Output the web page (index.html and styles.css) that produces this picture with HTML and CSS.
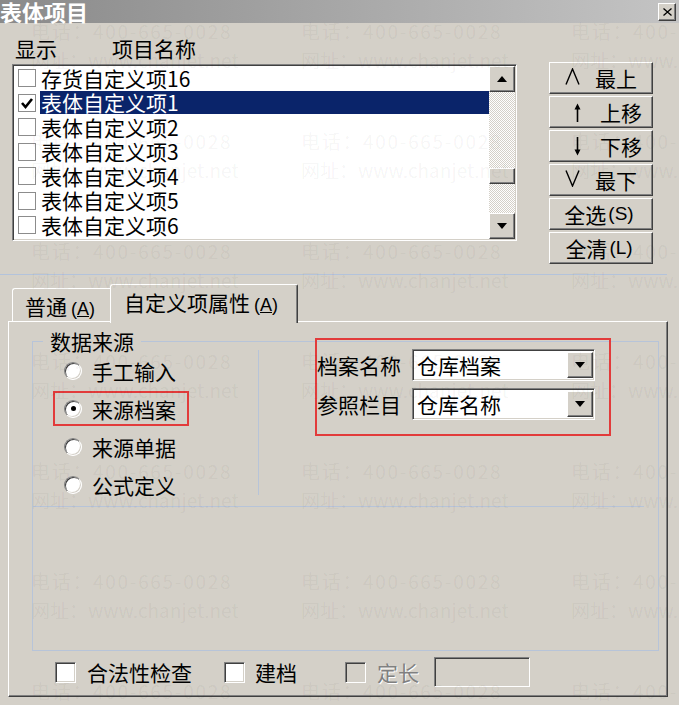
FILE: index.html
```html
<!DOCTYPE html>
<html lang="zh-CN">
<head>
<meta charset="utf-8">
<title>表体项目</title>
<link rel="stylesheet" href="styles.css">
</head>
<body>
<div class="titlebar">
  <span class="title">表体项目</span>
  <span class="close"><svg width="9" height="8" viewBox="0 0 9 8"><path d="M0.5 0.5L8.5 7.5M8.5 0.5L0.5 7.5" stroke="#000" stroke-width="1.3"/></svg></span>
</div>

<div class="upper">
  <div class="listcol">
    <div class="listhead"><span>显示</span><span class="h-name">项目名称</span></div>
    <div class="listbox">
      <div class="rows">
        <div class="row"><span class="lcb"></span><span class="ltext">存货自定义项16</span></div>
        <div class="row"><span class="lcb"><svg width="16" height="16" viewBox="0 0 16 16"><path d="M3 8L6.5 12L13 4" fill="none" stroke="#000" stroke-width="2.6"/></svg></span><span class="ltext sel">表体自定义项1</span></div>
        <div class="row"><span class="lcb"></span><span class="ltext">表体自定义项2</span></div>
        <div class="row"><span class="lcb"></span><span class="ltext">表体自定义项3</span></div>
        <div class="row"><span class="lcb"></span><span class="ltext">表体自定义项4</span></div>
        <div class="row"><span class="lcb"></span><span class="ltext">表体自定义项5</span></div>
        <div class="row"><span class="lcb"></span><span class="ltext">表体自定义项6</span></div>
      </div>
      <div class="vscroll">
        <div class="sbtn"><svg width="10" height="6" viewBox="0 0 10 6"><path d="M5 0L10 6H0Z" fill="#000"/></svg></div>
        <div class="track"><div class="thumb"></div></div>
        <div class="sbtn"><svg width="10" height="6" viewBox="0 0 10 6"><path d="M0 0H10L5 6Z" fill="#000"/></svg></div>
      </div>
    </div>
  </div>
  <div class="btncol">
    <div class="btn btn-chev"><svg class="chev" width="15" height="17" viewBox="0 0 15 17"><path d="M1 16.5L7.5 1L14 16.5" fill="none" stroke="#000" stroke-width="1.4"/></svg><span>最上</span></div>
    <div class="btn btn-arrow"><svg class="arr" width="9" height="19" viewBox="0 0 9 19"><path d="M4.5 3V19" stroke="#000" stroke-width="1.6"/><path d="M1.5 6.5L4.5 0.5L7.5 6.5Z" fill="#000"/></svg><span>上移</span></div>
    <div class="btn btn-arrow"><svg class="arr" width="9" height="19" viewBox="0 0 9 19"><path d="M4.5 0V16" stroke="#000" stroke-width="1.6"/><path d="M1.5 12.5L4.5 18.5L7.5 12.5Z" fill="#000"/></svg><span>下移</span></div>
    <div class="btn btn-chev"><svg class="chev" width="15" height="17" viewBox="0 0 15 17"><path d="M1 0.5L7.5 16L14 0.5" fill="none" stroke="#000" stroke-width="1.4"/></svg><span>最下</span></div>
    <div class="btn btn-center"><span>全选</span><span class="acc">(S)</span></div>
    <div class="btn btn-center"><span>全清</span><span class="acc">(L)</span></div>
  </div>
</div>

<div class="tabs">
  <div class="tab tab-off">普通<span class="acc tacc">(<u>A</u>)</span></div>
  <div class="tab tab-on">自定义项属性<span class="acc tacc">(<u>A</u>)</span></div>
</div>

<div class="panel">
  <fieldset class="frame">
    <legend>数据来源</legend>
    <div class="topsec">
      <div class="srcs">
        <div class="opt"><span class="radio"></span><span>手工输入</span></div>
        <div class="opt mark"><span class="radio on"></span><span>来源档案</span></div>
        <div class="opt"><span class="radio"></span><span>来源单据</span></div>
        <div class="opt"><span class="radio"></span><span>公式定义</span></div>
      </div>
      <div class="divider"></div>
      <div class="refbox">
        <div class="field"><span class="flabel">档案名称</span><div class="combo"><span class="ctext">仓库档案</span><span class="cbtn"><svg width="10" height="6" viewBox="0 0 10 6"><path d="M0 0H10L5 6Z" fill="#000"/></svg></span></div></div>
        <div class="field"><span class="flabel">参照栏目</span><div class="combo"><span class="ctext">仓库名称</span><span class="cbtn"><svg width="10" height="6" viewBox="0 0 10 6"><path d="M0 0H10L5 6Z" fill="#000"/></svg></span></div></div>
      </div>
    </div>
  </fieldset>
  <div class="checks">
    <span class="cb"></span><span class="ctxt">合法性检查</span>
    <span class="cb cb2"></span><span class="ctxt">建档</span>
    <span class="cb cb3 dis"></span><span class="ctxt dtxt">定长</span>
    <span class="tbox"></span>
  </div>
</div>

<div class="hline"></div>

<div class="wm">
  <div class="wcell"><div class="wtel">电话：400-665-0028</div><div>网址：www.chanjet.net</div></div>
  <div class="wcell"><div class="wtel">电话：400-665-0028</div><div>网址：www.chanjet.net</div></div>
  <div class="wcell"><div class="wtel">电话：400-665-0028</div><div>网址：www.chanjet.net</div></div>
  <div class="wcell"><div class="wtel">电话：400-665-0028</div><div>网址：www.chanjet.net</div></div>
  <div class="wcell"><div class="wtel">电话：400-665-0028</div><div>网址：www.chanjet.net</div></div>
  <div class="wcell"><div class="wtel">电话：400-665-0028</div><div>网址：www.chanjet.net</div></div>
  <div class="wcell"><div class="wtel">电话：400-665-0028</div><div>网址：www.chanjet.net</div></div>
  <div class="wcell"><div class="wtel">电话：400-665-0028</div><div>网址：www.chanjet.net</div></div>
  <div class="wcell"><div class="wtel">电话：400-665-0028</div><div>网址：www.chanjet.net</div></div>
  <div class="wcell"><div class="wtel">电话：400-665-0028</div><div>网址：www.chanjet.net</div></div>
  <div class="wcell"><div class="wtel">电话：400-665-0028</div><div>网址：www.chanjet.net</div></div>
  <div class="wcell"><div class="wtel">电话：400-665-0028</div><div>网址：www.chanjet.net</div></div>
  <div class="wcell"><div class="wtel">电话：400-665-0028</div><div>网址：www.chanjet.net</div></div>
  <div class="wcell"><div class="wtel">电话：400-665-0028</div><div>网址：www.chanjet.net</div></div>
  <div class="wcell"><div class="wtel">电话：400-665-0028</div><div>网址：www.chanjet.net</div></div>
  <div class="wcell"><div class="wtel">电话：400-665-0028</div><div>网址：www.chanjet.net</div></div>
  <div class="wcell"><div class="wtel">电话：400-665-0028</div><div>网址：www.chanjet.net</div></div>
  <div class="wcell"><div class="wtel">电话：400-665-0028</div><div>网址：www.chanjet.net</div></div>
  <div class="wcell"><div class="wtel">电话：400-665-0028</div><div>网址：www.chanjet.net</div></div>
  <div class="wcell"><div class="wtel">电话：400-665-0028</div><div>网址：www.chanjet.net</div></div>
  <div class="wcell"><div class="wtel">电话：400-665-0028</div><div>网址：www.chanjet.net</div></div>
</div>
</body>
</html>
```

FILE: styles.css
```css
* { box-sizing: border-box; }
html, body { margin: 0; padding: 0; }
body {
  width: 679px;
  height: 705px;
  overflow: hidden;
  position: relative;
  background: #d4d0c8;
  font-family: "Noto Sans CJK SC", "Noto Sans", sans-serif;
  font-size: 21px;
  line-height: 24px;
  color: #000;
}

/* title bar */
.titlebar {
  height: 23px;
  background: linear-gradient(90deg, #8a8a8a, #c4c4c4);
  display: flex;
  align-items: center;
  justify-content: space-between;
  padding-right: 3px;
}
.title { color: #fff; font-weight: 700; font-size: 22px; line-height: 23px; }
.close {
  width: 18px; height: 18px;
  background: #d4d0c8;
  border: 1px solid; border-color: #fff #404040 #404040 #fff;
  box-shadow: inset -1px -1px #808080;
  display: flex; align-items: center; justify-content: center;
}

/* raised / sunken */
.btn, .sbtn, .thumb, .cbtn {
  background: #d4d0c8;
  border: 1px solid; border-color: #fff #404040 #404040 #fff;
  box-shadow: inset -1px -1px #808080;
}

/* upper area */
.upper { display: flex; align-items: flex-start; padding-left: 12px; }
.listcol { margin-top: 13px; }
.listhead { height: 24px; line-height: 24px; display: flex; padding-left: 3px; }
.h-name { margin-left: 55px; }
.listbox {
  margin-top: 4px;
  width: 505px; height: 177px;
  border: 1px solid; border-color: #808080 #fff #fff #808080;
  box-shadow: inset 1px 1px #404040, inset -1px -1px #d4d0c8;
  padding: 1px;
  background: #fff;
  display: flex;
}
.rows { flex: 1; }
.row { height: 24.5px; display: flex; align-items: center; }
.lcb {
  width: 18px; height: 18px; margin: 0 4px 0 4px;
  border: 1px solid #8c8c8c; background: #fff;
  display: flex; align-items: center; justify-content: center;
}
.ltext { flex: 1; height: 23px; line-height: 23px; padding-left: 1px; }
.sel { background: #0a246a; color: #fff; }
.vscroll { width: 26px; display: flex; flex-direction: column; }
.sbtn { height: 26px; display: flex; align-items: center; justify-content: center; }
.track {
  flex: 1;
  background: repeating-conic-gradient(#d4d0c8 0 25%, #fff 0 50%) 0 0 / 2px 2px;
}
.thumb { height: 16px; margin-top: 76px; }

.btncol { margin-top: 39px; margin-left: 32px; display: flex; flex-direction: column; gap: 2px; }
.btn { width: 104px; height: 32px; display: flex; align-items: center; }
.btn-chev { padding-left: 15px; }
.btn-chev .chev { margin-right: 15px; margin-top: -3px; }
.btn-arrow { padding-left: 23px; }
.btn-arrow .arr { margin-right: 18px; }
.btn-center { justify-content: center; padding-right: 4px; }
.acc { font-family: "Liberation Sans", sans-serif; font-size: 19px; margin-left: 2px; }

/* tabs */
.tabs {
  display: flex; align-items: flex-end;
  padding-left: 12px; margin-top: 20px; height: 37px;
  position: relative; z-index: 1;
}
.tab { background: #d4d0c8; line-height: 24px; }
.tab-off {
  width: 98px; height: 33px;
  border-top: 1px solid #fff; border-left: 1px solid #fff;
  border-top-left-radius: 3px;
  padding: 5px 0 0 12px;
}
.tab-on {
  width: 188px; height: 39px; margin-bottom: -2px;
  border-top: 1px solid #fff; border-left: 1px solid #fff;
  border-right: 1px solid #404040;
  box-shadow: inset -1px 0 #808080;
  border-top-left-radius: 3px; border-top-right-radius: 2px;
  padding: 5px 0 0 13px;
}
.tacc { font-size: 18px; margin-left: 4px; }

/* panel */
.panel {
  margin-left: 8px;
  width: 660px; height: 376px;
  border: 1px solid; border-color: #fff #404040 #404040 #fff;
  box-shadow: inset -1px -1px #808080;
}
.frame {
  margin: 7px 0 0 23px;
  width: 627px; height: 322px;
  padding: 0; min-width: 0;
  border: 1px solid #b7c4d9;
}
.frame legend { padding: 0 7px; margin-left: 10px; line-height: 24px; }
.topsec {
  display: flex; align-items: flex-start;
  height: 154px; margin-right: 14px;
  border-bottom: 1px solid #b7c4d9;
}
.srcs { width: 225px; display: flex; flex-direction: column; gap: 3px; padding-top: 0; }
.opt {
  width: 136px; height: 35px; margin-left: 20px;
  border: 2px solid transparent;
  display: flex; align-items: center; padding-left: 9px;
}
.opt .radio { margin-right: 10px; }
.mark { border-color: #e23b3b; }
.radio {
  width: 18px; height: 18px; border-radius: 50%;
  border: 1px solid; border-color: #808080 #fff #fff #808080;
  box-shadow: inset 1px 1px #404040, inset -1px -1px #d4d0c8;
  background: #fff;
  display: flex; align-items: center; justify-content: center;
}
.radio.on::after { content: ""; width: 5px; height: 5px; border-radius: 50%; background: #000; }
.divider { width: 1px; height: 145px; margin-top: -3px; background: #b7c4d9; }
.refbox {
  margin: -15px 0 0 56px;
  width: 296px;
  border: 2px solid #e23b3b;
  padding: 9px 0 14px 0;
  display: flex; flex-direction: column; gap: 7px;
}
.field { display: flex; align-items: center; }
.flabel { width: 95px; }
.combo {
  width: 183px; height: 32px;
  border: 1px solid; border-color: #808080 #fff #fff #808080;
  box-shadow: inset 1px 1px #404040, inset -1px -1px #d4d0c8;
  background: #fff; padding: 2px 1px 2px 1px;
  display: flex; align-items: center;
}
.ctext { flex: 1; padding-left: 3px; line-height: 26px; }
.cbtn { width: 26px; height: 26px; display: flex; align-items: center; justify-content: center; }

.checks { display: flex; align-items: center; margin: 6px 0 0 46px; height: 30px; }
.cb {
  width: 21px; height: 21px;
  border: 1px solid; border-color: #808080 #fff #fff #808080;
  box-shadow: inset 1px 1px #404040, inset -1px -1px #d4d0c8;
  background: #fff;
  margin-right: 11px;
}
.cb.dis { background: #d4d0c8; }
.cb2 { margin-left: 32px; margin-right: 10px; }
.cb3 { margin-left: 48px; }
.dtxt { color: #808080; text-shadow: 1px 1px #fff; }
.tbox {
  width: 96px; height: 30px; margin-left: 15px;
  border: 1px solid; border-color: #808080 #fff #fff #808080;
  box-shadow: inset 1px 1px #404040, inset -1px -1px #d4d0c8;
  background: #d4d0c8;
}

/* overlays: scan artifacts */
.hline { position: absolute; left: 0; top: 274px; width: 667px; height: 1px; background: #b3c3dc; }
.wm {
  position: absolute; inset: 0;
  display: grid;
  grid-template-columns: repeat(3, 270px);
  grid-auto-rows: 110px;
  padding: 16px 0 0 31px;
  pointer-events: none;
  color: rgba(0, 0, 0, 0.05);
  font-size: 19px; line-height: 29px;
  white-space: nowrap;
  z-index: 5;
}
.wtel { letter-spacing: 1.7px; }
```
